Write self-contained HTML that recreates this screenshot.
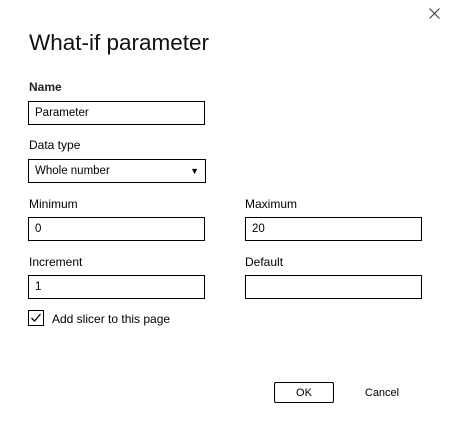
<!DOCTYPE html><html><head><style>
body{margin:0;width:450px;height:432px;background:#fff;font-family:"Liberation Sans",sans-serif;color:#000;position:relative;overflow:hidden}
.a{position:absolute}
.lbl{font-size:12px}
.in{position:absolute;border:1px solid #000;box-sizing:border-box;height:24px;font-size:11.5px;line-height:23px;padding-left:6px}
</style></head><body>
<svg class="a" style="left:429px;top:8px" width="11" height="11"><path d="M0.5 0.5L10.5 10.5M10.5 0.5L0.5 10.5" stroke="#333" stroke-width="1"/></svg>
<div class="a" style="left:29px;top:30px;font-size:22.5px;font-weight:300;color:#111">What-if parameter</div>
<div class="a lbl" style="left:29px;top:80px;font-weight:bold;color:#222">Name</div>
<div class="in" style="left:28px;top:101px;width:177px">Parameter</div>
<div class="a lbl" style="left:29px;top:138px">Data type</div>
<div class="in" style="left:28px;top:159px;width:178px">Whole number<span class="a" style="right:6px;top:0;font-size:9px">▼</span></div>
<div class="a lbl" style="left:29px;top:197px">Minimum</div>
<div class="a lbl" style="left:245px;top:197px">Maximum</div>
<div class="in" style="left:28px;top:217px;width:177px">0</div>
<div class="in" style="left:245px;top:217px;width:177px">20</div>
<div class="a lbl" style="left:29px;top:255px">Increment</div>
<div class="a lbl" style="left:245px;top:255px">Default</div>
<div class="in" style="left:28px;top:275px;width:177px">1</div>
<div class="in" style="left:245px;top:275px;width:177px"></div>
<svg class="a" style="left:28px;top:310px" width="16" height="16"><rect x="0.5" y="0.5" width="15" height="15" fill="none" stroke="#000"/><path d="M3.5 8L6.5 11L12.5 4" fill="none" stroke="#000" stroke-width="1.3"/></svg>
<div class="a lbl" style="left:52px;top:312px">Add slicer to this page</div>
<div class="a" style="left:274px;top:382px;width:60px;height:21px;border:1px solid #000;box-sizing:border-box;border-radius:2px;text-align:center;font-size:11px;line-height:21px">OK</div>
<div class="a" style="left:352px;top:382px;width:60px;height:21px;text-align:center;font-size:11px;line-height:23px">Cancel</div>
</body></html>
